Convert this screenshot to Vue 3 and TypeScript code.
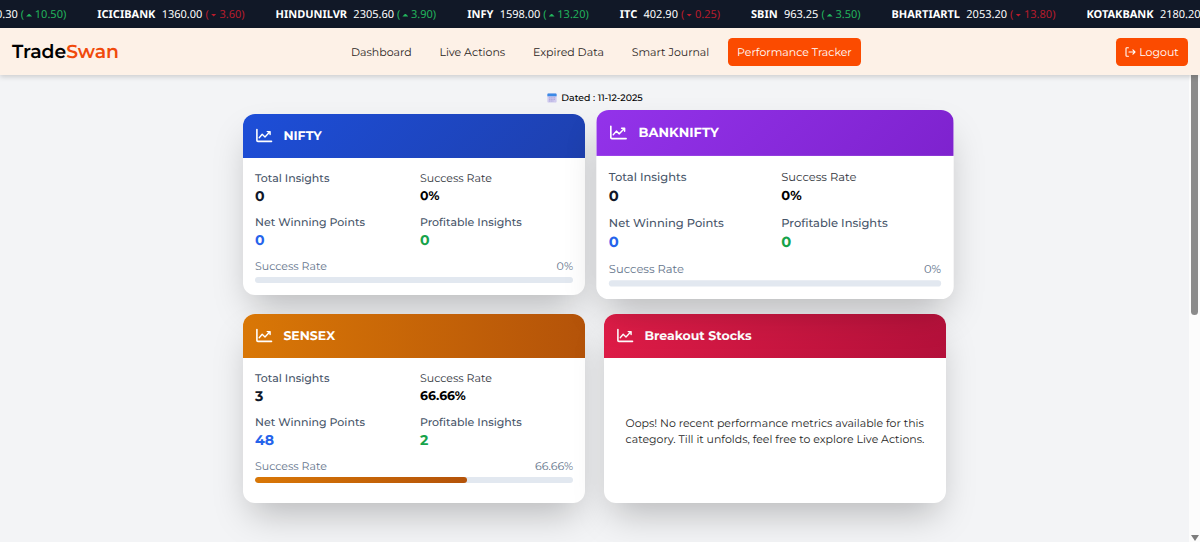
<script setup lang="ts">
interface Quote { symbol?: string; price: string; change?: string; up?: boolean }
interface Metric { label: string; value: string; tone: string }
interface Card { title: string; theme: string; active?: boolean; rate?: number; metrics: Metric[] }

const quotes: Quote[] = [
  { price: '0.30', change: '10.50', up: true },
  { symbol: 'ICICIBANK', price: '1360.00', change: '3.60', up: false },
  { symbol: 'HINDUNILVR', price: '2305.60', change: '3.90', up: true },
  { symbol: 'INFY', price: '1598.00', change: '13.20', up: true },
  { symbol: 'ITC', price: '402.90', change: '0.25', up: false },
  { symbol: 'SBIN', price: '963.25', change: '3.50', up: true },
  { symbol: 'BHARTIARTL', price: '2053.20', change: '13.80', up: false },
  { symbol: 'KOTAKBANK', price: '2180.20' },
]

const links = ['Dashboard', 'Live Actions', 'Expired Data', 'Smart Journal', 'Performance Tracker']

function metrics(total: string, rate: string, points: string, profitable: string): Metric[] {
  return [
    { label: 'Total Insights', value: total, tone: 'ink' },
    { label: 'Success Rate', value: rate, tone: 'rate' },
    { label: 'Net Winning Points', value: points, tone: 'blue' },
    { label: 'Profitable Insights', value: profitable, tone: 'green' },
  ]
}

const cards: Card[] = [
  { title: 'NIFTY', theme: 'nifty', rate: 0, metrics: metrics('0', '0%', '0', '0') },
  { title: 'BANKNIFTY', theme: 'bank', active: true, rate: 0, metrics: metrics('0', '0%', '0', '0') },
  { title: 'SENSEX', theme: 'sensex', rate: 66.66, metrics: metrics('3', '66.66%', '48', '2') },
  { title: 'Breakout Stocks', theme: 'breakout', metrics: [] },
]
</script>

<template>
  <div class="page">
    <div class="ticker">
      <div class="track">
        <div v-for="q in quotes" :key="q.price" class="quote">
          <b v-if="q.symbol">{{ q.symbol }}</b>
          <span>{{ q.price }}</span>
          <span v-if="q.change" class="change" :class="q.up ? 'up' : 'down'">(<i class="caret"></i>{{ q.change }})</span>
        </div>
      </div>
    </div>

    <header class="navbar">
      <div class="logo">Trade<span>Swan</span></div>
      <nav class="links">
        <a v-for="(l, i) in links" :key="l" :class="['link', { current: i === 4 }]">{{ l }}</a>
      </nav>
      <button class="logout">
        <svg width="11" height="10" viewBox="0 0 11 10" fill="none" stroke="currentColor" stroke-width="1.1" stroke-linecap="round" stroke-linejoin="round">
          <path d="M3.4 .7H1.9a.9.9 0 0 0-.9.9v6.8a.9.9 0 0 0 .9.9h1.5M4 5h6M7.9 2.9 10 5 7.9 7.1" />
        </svg>
        <span>Logout</span>
      </button>
    </header>

    <main class="content">
      <div class="main">
        <div class="dated">
          <svg width="10" height="10" viewBox="0 0 10 10">
            <rect x=".4" y=".6" width="9.2" height="9" rx=".8" fill="#cfc9ee" />
            <path d="M.4 3.2V1.4a.8.8 0 0 1 .8-.8h7.6a.8.8 0 0 1 .8.8v1.8z" fill="#3b8ae6" />
            <path d="M2 4.8h6M2 6.4h6M2 8h4.4" stroke="#a59fd6" stroke-width=".8" stroke-dasharray="1.2 .5" />
          </svg>
          <span>Dated : 11-12-2025</span>
        </div>
        <section class="grid">
          <article v-for="c in cards" :key="c.title" :class="['card', c.theme, { active: c.active }]">
            <div class="head">
              <svg width="18" height="16" viewBox="0 0 18 16" fill="none" stroke="#fff" stroke-width="1.6" stroke-linecap="round" stroke-linejoin="round">
                <path d="M1.9 1.6v10.8a1 1 0 0 0 1 1h13.6" />
                <path d="M4.2 9.7 7.2 6.3l2.8 2.6 4.6-4.8M12.2 3.6h2.9v2.9" stroke-width="1.4" />
              </svg>
              <h2>{{ c.title }}</h2>
            </div>
            <div v-if="c.metrics.length" class="body">
              <div class="metrics">
                <div v-for="m in c.metrics" :key="m.label">
                  <div :class="['label', m.tone + '-label']">{{ m.label }}</div>
                  <div :class="['value', m.tone]">{{ m.value }}</div>
                </div>
              </div>
              <div class="summary"><span>Success Rate</span><span>{{ c.rate }}%</span></div>
              <div class="bar"><div class="fill" :style="{ width: c.rate + '%' }"></div></div>
            </div>
            <div v-else class="empty">
              <p>Oops! No recent performance metrics available for this<br />category. Till it unfolds, feel free to explore Live Actions.</p>
            </div>
          </article>
        </section>
      </div>
      <div class="scroll"><div class="thumb"></div><div class="arrow"></div></div>
    </main>
  </div>
</template>

<style>
html, body { margin: 0; overflow: hidden; }
</style>

<style scoped>
* { box-sizing: border-box; }
.page { width: 1200px; height: 542px; display: flex; flex-direction: column; overflow: hidden; background: #f3f4f6; color: #0a0a0a; font-family: Montserrat, Inter, sans-serif; text-rendering: geometricPrecision; }
.ticker { height: 28px; flex: none; overflow: hidden; background: #111827; color: #fff; font: 11px/28px "Noto Sans", sans-serif; padding-top: 1px; }
.track { display: flex; gap: 31px; width: max-content; margin-left: -4px; }
.quote { display: flex; white-space: nowrap; }
.quote b { margin-right: 6.3px; }
.change { margin-left: 3px; display: flex; align-items: center; }
.caret { width: 6px; height: 3px; margin: 0 2.7px 0 2px; background: currentColor; }
.up { color: #22b45c; }
.up .caret { clip-path: polygon(50% 0, 100% 100%, 0 100%); }
.down { color: #b91c2c; }
.down .caret { clip-path: polygon(0 0, 100% 0, 50% 100%); }

.navbar { position: relative; z-index: 2; height: 47px; flex: none; display: flex; align-items: center; padding: 0 12px; background: #fdf1e7; box-shadow: 0 2px 5px rgba(0, 0, 0, .16); }
.logo { width: 329.5px; font-size: 18.8px; font-weight: 600; color: #000; }
.logo span { color: #f04a0c; }
.links { display: flex; align-items: center; gap: 9px; }
.link { padding: 0 9.4px; font-size: 10.98px; line-height: 28px; color: #2b2523; border-radius: 4.5px; white-space: nowrap; }
.link.current, .logout { background: #fb4b00; color: #fff; }
.logout { margin-left: auto; border: 0; border-radius: 4.5px; width: 72px; height: 28px; padding: 0; display: flex; align-items: center; justify-content: center; gap: 3px; font: 11px/28px Montserrat, Inter, sans-serif; text-rendering: inherit; }

.content { flex: 1; display: flex; min-height: 0; }
.main { flex: 1; display: flex; flex-direction: column; align-items: center; }
.dated { display: flex; align-items: center; gap: 4px; height: 16px; margin: 15px 0 8px; padding-left: 1px; font-size: 9.4px; font-weight: 500; color: #000; }
.grid { display: grid; grid-template-columns: 342px 342px; grid-template-rows: 181px 188.5px; gap: 19px; }
.card { display: flex; flex-direction: column; overflow: hidden; border-radius: 12px; background: #fff; box-shadow: 0 18px 36px -8px rgba(0, 0, 0, .25); }
.active { transform: scale(1.045); }
.head { height: 44px; flex: none; display: flex; align-items: center; gap: 10px; padding: 0 12.4px; color: #fff; }
h2 { margin: 0; font-size: 12.5px; font-weight: 700; }
.nifty .head { background: linear-gradient(135deg, #1d4ed8, #1e40af); }
.bank .head { background: linear-gradient(135deg, #9333ea, #7e22ce); }
.sensex .head, .sensex .fill { background: linear-gradient(90deg, #d97706, #b45309); }
.breakout .head { background: linear-gradient(135deg, #e11d48, #b3103a); }
.body { padding: 12px; }
.metrics { display: grid; grid-template-columns: 1fr 1fr; gap: 8px 12px; }
.label { font-size: 11px; line-height: 16px; font-weight: 500; color: #475569; }
.rate-label { font-weight: 400; color: #30343b; }
.value { font-size: 14.1px; line-height: 20px; font-weight: 700; }
.value.rate { margin-bottom: -2px; font-size: 12.5px; line-height: 21px; color: #000; }
.ink { color: #0f172a; }
.blue { color: #2563eb; }
.green { color: #16a34a; }
.summary { display: flex; justify-content: space-between; margin-top: 8px; font-size: 11px; line-height: 16px; color: #64748b; }
.bar { height: 6px; margin-top: 3px; border-radius: 3px; background: #e2e8f0; overflow: hidden; }
.fill { height: 100%; border-radius: 3px; }
.empty { flex: 1; display: flex; align-items: center; justify-content: center; padding-top: 1px; }
.empty p { margin: 0; font-size: 10.95px; line-height: 16px; color: #1f1f1f; white-space: nowrap; }
.scroll { width: 11px; background: #fcfcfc; display: flex; flex-direction: column; align-items: center; justify-content: space-between; }
.thumb { width: 7px; height: 240px; background: #8b8b8b; border-radius: 0 0 4px 4px; }
.arrow { border: 4px solid transparent; border-top: 6px solid #7d7d7d; border-bottom: 0; margin-bottom: 1px; }
</style>
